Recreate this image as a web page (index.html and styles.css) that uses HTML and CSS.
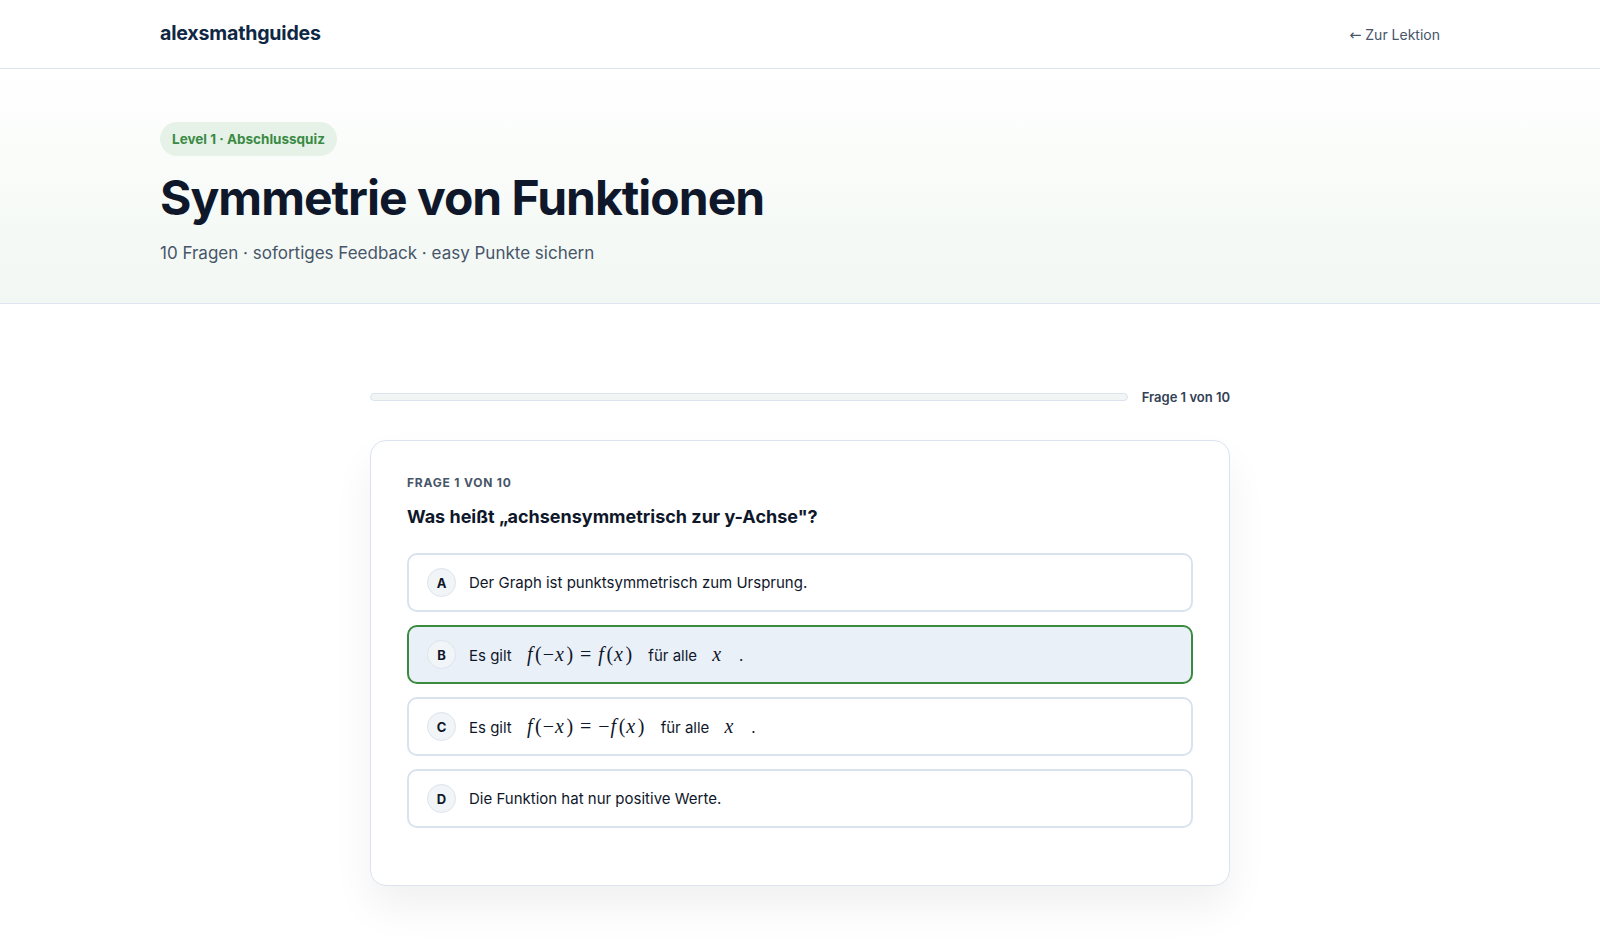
FILE: index.html
```html
<!DOCTYPE html>
<html lang="de">
<head>
<meta charset="utf-8">
<title>Symmetrie von Funktionen – Quiz</title>
<link rel="stylesheet" href="styles.css">
</head>
<body>
<header class="topbar">
  <div class="inner topbar-inner">
    <a class="logo" href="#">alexsmathguides</a>
    <a class="back" href="#"><span class="arrow">←</span> Zur Lektion</a>
  </div>
</header>
<section class="hero">
  <div class="inner">
    <span class="badge">Level 1 · Abschlussquiz</span>
    <h1 class="title">Symmetrie von Funktionen</h1>
    <p class="subtitle">10 Fragen · sofortiges Feedback · easy Punkte sichern</p>
  </div>
</section>
<main class="quiz">
  <div class="progress-row">
    <div class="progress"><div class="progress-fill" style="width:0%"></div></div>
    <span class="progress-label">Frage 1 von 10</span>
  </div>
  <div class="card">
    <div class="eyebrow">Frage 1 von 10</div>
    <h2 class="question">Was heißt „achsensymmetrisch zur y-Achse"?</h2>
    <div class="options">
      <button class="option"><span class="letter">A</span><span class="opt-text">Der Graph ist punktsymmetrisch zum Ursprung.</span></button>
      <button class="option selected"><span class="letter">B</span><span class="opt-text">Es gilt <span class="math"><i>f</i>(−<i>x</i>)<span class="rel">=</span><i>f</i>(<i>x</i>)</span> für alle <span class="math"><i>x</i></span> .</span></button>
      <button class="option"><span class="letter">C</span><span class="opt-text">Es gilt <span class="math"><i>f</i>(−<i>x</i>)<span class="rel">=</span>−<i>f</i>(<i>x</i>)</span> für alle <span class="math"><i>x</i></span> .</span></button>
      <button class="option"><span class="letter">D</span><span class="opt-text">Die Funktion hat nur positive Werte.</span></button>
    </div>
  </div>
</main>
</body>
</html>
```
FILE: styles.css
```css
* { box-sizing: border-box; }
html, body { margin: 0; padding: 0; background: #ffffff; }
body {
  font-family: Inter, "Noto Sans", "Liberation Sans", sans-serif;
  color: #0f172a;
}
a { text-decoration: none; }
.inner { width: 1280px; margin: 0 auto; }

.topbar { border-bottom: 1px solid #dde5ee; background: #fff; }
.topbar-inner {
  height: 68px;
  display: flex;
  align-items: center;
  justify-content: space-between;
}
.logo { font-size: 19.6px; font-weight: 700; color: #0f2744; letter-spacing: -0.2px; line-height: 24px; margin-top: -2px; }
.back { font-size: 14px; color: #475569; }
.arrow { font-family: "DejaVu Sans", sans-serif; font-size: 14.5px; }

.hero {
  background: linear-gradient(180deg, #ffffff 0%, #f1f7f2 100%);
  border-bottom: 1px solid #dde5ee;
  padding: 53px 0 38px;
}
.badge {
  display: inline-block;
  background: #e6f2e8;
  color: #3a8a44;
  font-size: 13.5px;
  font-weight: 700;
  line-height: 18px;
  padding: 8px 12px;
  border-radius: 999px;
}
.title {
  margin: 14px 0 0;
  font-size: 48px;
  line-height: 56px;
  font-weight: 700;
  letter-spacing: -1px;
  color: #0f172a;
}
.subtitle {
  margin: 15px 0 0;
  font-size: 17px;
  line-height: 24px;
  color: #475569;
}

.quiz { width: 860px; margin: 0 auto; padding-top: 85px; padding-bottom: 80px; }
.progress-row { display: flex; align-items: center; gap: 14px; }
.progress {
  flex: 1;
  height: 8px;
  border-radius: 999px;
  background: #f1f5f4;
  border: 1px solid #dbe4ee;
  overflow: hidden;
}
.progress-fill { height: 100%; background: #3a8a44; }
.progress-label { font-size: 13px; font-weight: 600; color: #334155; }

.card {
  margin-top: 35px;
  background: #fff;
  border: 1px solid #dbe4ee;
  border-radius: 16px;
  padding: 34px 36px 57px;
  box-shadow: 0 22px 40px rgba(15, 23, 42, 0.06);
}
.eyebrow {
  font-size: 12px;
  font-weight: 700;
  text-transform: uppercase;
  letter-spacing: 0.8px;
  color: #475569;
  line-height: 16px;
}
.question {
  margin: 14px 0 0;
  font-size: 18px;
  line-height: 24px;
  font-weight: 700;
  color: #0f172a;
}
.options { margin-top: 24px; display: flex; flex-direction: column; gap: 13px; }
.option {
  display: flex;
  align-items: center;
  gap: 13px;
  height: 59px;
  padding: 0 18px;
  background: #fff;
  border: 2px solid #d9e3ee;
  border-radius: 10px;
  font-family: inherit;
  text-align: left;
  cursor: pointer;
}
.option.selected { border-color: #3a8a40; background: #eaf0f8; }
.letter {
  width: 29px;
  height: 29px;
  flex: none;
  border-radius: 50%;
  background: #f1f5f8;
  border: 1px solid #dbe4ee;
  display: flex;
  align-items: center;
  justify-content: center;
  font-size: 13px;
  font-weight: 700;
  color: #0f172a;
}
.opt-text { font-size: 15px; color: #0f172a; }
.math {
  font-family: "Liberation Serif", "DejaVu Serif", serif;
  font-size: 20px;
  letter-spacing: 1px;
  margin: 0 11px;
}
.math i { font-style: italic; padding-right: 1.5px; }
.rel { margin: 0 6px; }
```
